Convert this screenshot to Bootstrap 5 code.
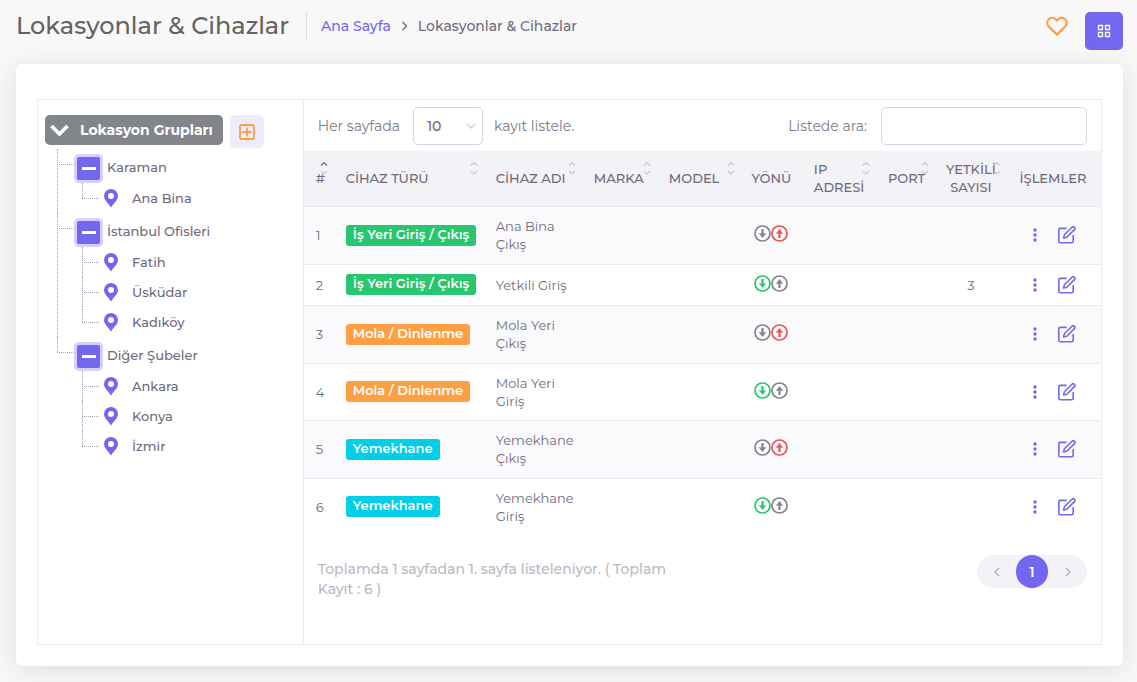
<!DOCTYPE html>
<html lang="tr">
<head>
<meta charset="utf-8">
<meta name="viewport" content="width=device-width, initial-scale=1">
<title>Lokasyonlar &amp; Cihazlar</title>
<link href="https://cdn.jsdelivr.net/npm/bootstrap@5.3.0/dist/css/bootstrap.min.css" rel="stylesheet">
<style>
:root{--brand:#7367f0;--ink:#6e6b7b;--line:#ebe9f1;--gray:#82868b;--green:#28c76f;--red:#ea5455;--orange:#ff9f43}
body{font-family:Montserrat,Inter,"Noto Sans",sans-serif;font-size:14px;line-height:20px;color:var(--ink);background:#f8f8f8}
a{color:var(--brand);text-decoration:none}
svg{display:block;flex:none}
.page-head{padding:12px 14px 14px 16px}
.page-title{font-size:24px;line-height:28px;font-weight:500;color:#636363;padding-right:17px;border-right:1px solid #d6dce1}
.crumbs{font-size:14px;font-weight:500;margin-left:14px;gap:10px}
.btn-grid{width:38px;height:38px;border-radius:5px;background:var(--brand);color:#fff}
.heart{color:var(--orange);padding:4px 0 0}
.panel-card{margin:0 14px 16px 16px;padding:35px 21px 21px;border:0;border-radius:6px;box-shadow:0 4px 24px rgba(34,41,47,.12)}
.split{border:1px solid var(--line);min-height:546px}
.side{border-right:1px solid var(--line);padding:15px 7px}
.side-head{gap:7px}
.root-btn{height:30px;padding:0 10px 0 5px;gap:11px;border-radius:5px;background:var(--gray);color:#fff;font-size:14px;font-weight:700}
.add-btn{width:34px;height:33px;border-radius:5px;background:#eeedfd;color:var(--orange)}
.tree,.tree ul{list-style:none;margin:0;padding:0}
.tree{font-size:13px;font-weight:500;margin-top:1px;padding-left:12px}
.tree li{position:relative}
.tree>li{padding:4px 0 0 20px}
.tree>li::before,.tree ul>li::before{content:"";position:absolute;left:0;top:0;bottom:0;border-left:1px dotted #a3a1b3}
.tree>li:last-child::before{bottom:auto;height:15px}
.tree>li::after,.tree ul>li::after{content:"";position:absolute;left:0;top:15px;width:17px;border-top:1px dotted #a3a1b3}
.tree ul{margin-left:5px}
.tree ul>li{padding-left:22px;height:30px}
.tree ul>li:last-child::before{bottom:auto;height:15px}
.group-row{height:30px;gap:7px}
.group-row a{padding-bottom:2px}
.toggle{width:23px;height:23px;border-radius:2px;background:var(--brand);box-shadow:0 0 0 3px #d5d1fb}
.toggle span{width:14px;height:3px;background:#fff}
.leaf{height:30px;gap:14px}
.tree a{color:var(--ink)}
.pin{color:var(--brand)}
.tools{padding:7px 14px 6px;color:#7c7a89}
.tools .form-select{width:70px;height:38px;padding:0 24px 0 13px;margin:0 11px 0 13px;font-size:14px;font-weight:500;color:var(--ink);border-color:#d8d6de;border-radius:5px;background-position:right 6px center;background-size:10px;background-image:url("data:image/svg+xml,%3Csvg xmlns='http://www.w3.org/2000/svg' viewBox='0 0 10 10' fill='none' stroke='%23d0ced8' stroke-width='1.3'%3E%3Cpath d='M1 3l4 4 4-4'/%3E%3C/svg%3E")}
.tools .form-control{width:206px;height:38px;margin-left:14px;border-color:#d8d6de;border-radius:5px}
.device-table{table-layout:fixed;margin:0;color:var(--ink);font-size:13px;line-height:18px}
.device-table th,.device-table td{padding:9px 4px 9px 12px;vertical-align:middle;border-color:var(--line);color:var(--ink);box-shadow:none}
.device-table th{position:relative;padding:9px 0 9px 12px;height:55px;font-weight:500;background:#f3f2f7}
.device-table .mid{padding-left:0;padding-right:0;text-align:center}
.device-table .mid:last-child{padding-right:2px}
.device-table td{height:57px;background:transparent}
.device-table tr:nth-child(odd) td{height:58px}
.device-table .low td{height:41px}
.device-table tbody tr:nth-child(odd){background:#fafafc}
.device-table tbody tr:last-child td{border-bottom:0}
.w-no{width:30px}.w-type{width:150px}.w-name{width:98px}.w-brand{width:75px}.w-model{width:84px}.w-dir{width:61px}.w-ip{width:74px}.w-port{width:59px}.w-auth{width:72px}.w-act{width:94px}
.sort{position:absolute;right:6px;top:10px;color:#c9c7d1}
.kind{height:21px;padding:0 7px;line-height:19px;font-size:13px;font-weight:600;border-radius:3px;color:#fff;display:inline-block;white-space:nowrap;vertical-align:middle}
.kind-work{background:var(--green)}.kind-rest{background:var(--orange)}.kind-food{background:#00cfe8}
.c-gray{color:var(--gray)}.c-green{color:var(--green)}.c-red{color:var(--red)}
.dirs{padding-bottom:3px}
.acts{gap:17px;color:var(--brand)}
.acts .btn{color:var(--brand)}
.foot{padding:20px 14px}
.foot-note{width:370px;color:#b9b9c3;font-weight:500;padding-top:4px}
.pager{border-radius:17px;background:#f3f2f7;height:33px}
.pager .page-item .page-link{width:39px;height:33px;margin:0;padding:0;border:0;background:none;color:#b0aebb;font-size:14px;display:flex;align-items:center;justify-content:center}
.pager .page-item.active .page-link{width:32px;border-radius:16px;background:var(--brand);color:#fff;font-weight:600}
</style>
</head>
<body>
<svg class="d-none" xmlns="http://www.w3.org/2000/svg">
<symbol id="pin" viewBox="0 0 14 19"><path fill="currentColor" fill-rule="evenodd" d="M7 0a7 7 0 0 0-7 7c0 4.500 4.500 7 7 11.500 2.500-4.500 7-7 7-11.500a7 7 0 0 0-7-7zm0 4a3 3 0 1 1 0 6 3 3 0 0 1 0-6z"/></symbol>
<symbol id="down" viewBox="0 0 17 17"><circle cx="8.500" cy="8.500" r="7.500" fill="none" stroke="currentColor" stroke-width="1.700"/><path d="M8.500 4v7" stroke="currentColor" stroke-width="2.200"/><path d="M4.600 8l2.400.6h3l2.400-.6-3.900 4.900z" fill="currentColor"/></symbol>
<symbol id="up" viewBox="0 0 17 17"><circle cx="8.500" cy="8.500" r="7.500" fill="none" stroke="currentColor" stroke-width="1.700"/><path d="M8.500 13V6" stroke="currentColor" stroke-width="2.200"/><path d="M4.600 9l2.400-.6h3l2.400.6-3.900-4.900z" fill="currentColor"/></symbol>
<symbol id="dots" viewBox="0 0 4 14"><g fill="currentColor"><circle cx="2" cy="2" r="1.700"/><circle cx="2" cy="7" r="1.700"/><circle cx="2" cy="12" r="1.700"/></g></symbol>
<symbol id="edit" viewBox="1 1 22.500 22.500"><path d="M11 4H4a2 2 0 0 0-2 2v14a2 2 0 0 0 2 2h14a2 2 0 0 0 2-2v-7M18.500 2.500a2.121 2.121 0 0 1 3 3L12 15l-4 1 1-4z" fill="none" stroke="currentColor" stroke-width="2" stroke-linecap="round" stroke-linejoin="round"/></symbol>
<symbol id="sort" viewBox="0 0 8 14"><path d="M1 4.500l3-3 3 3M1 10l3 3 3-3" fill="none" stroke="currentColor" stroke-width="1.200"/></symbol>
</svg>

<header class="page-head d-flex align-items-start">
  <h1 class="page-title mb-0">Lokasyonlar &amp; Cihazlar</h1>
  <nav class="crumbs d-flex align-items-center pt-1" aria-label="Sayfa yolu">
    <a href="#">Ana Sayfa</a>
    <svg width="7" height="10" viewBox="0 0 7 10" fill="none" stroke="#6e6b7b" stroke-width="1.400"><path d="M1.500 1l4 4-4 4"/></svg>
    <span>Lokasyonlar &amp; Cihazlar</span>
  </nav>
  <div class="ms-auto d-flex align-items-start gap-3">
    <button class="btn border-0 heart" type="button" aria-label="Favorilere ekle"><svg width="24" height="21" viewBox="0 0 24 21" fill="none" stroke="currentColor" stroke-width="2.200" stroke-linejoin="round"><path d="M20.300 3.300a5 5 0 0 0-7.100 0L12 4.500l-1.200-1.200a5 5 0 0 0-7.100 7.100L12 18.600l8.300-8.200a5 5 0 0 0 0-7.100z"/></svg></button>
    <button class="btn btn-grid border-0 p-0 d-flex align-items-center justify-content-center" type="button" aria-label="Menü"><svg width="14" height="14" viewBox="0 0 14 14" fill="none" stroke="currentColor" stroke-width="1.300"><path d="M1.500 1.500h4v4h-4zM8.500 1.500h4v4h-4zM1.500 8.500h4v4h-4zM8.500 8.500h4v4h-4z"/></svg></button>
  </div>
</header>

<main class="card panel-card">
  <div class="split row g-0">
    <aside class="side col-3">
      <div class="side-head d-flex align-items-start">
        <button class="btn border-0 root-btn d-flex align-items-center" type="button"><svg width="19" height="13" viewBox="0 0 19 13" fill="none" stroke="currentColor" stroke-width="3.600"><path d="M1.500 2l8 8 8-8"/></svg>Lokasyon Grupları</button>
        <button class="btn border-0 p-0 add-btn d-flex align-items-center justify-content-center" type="button" aria-label="Grup ekle"><svg width="16" height="16" viewBox="0 0 16 16" fill="none" stroke="currentColor" stroke-width="1.800"><rect x="1" y="1" width="14" height="14" rx="1.500"/><path d="M8 3.500v9M3.500 8h9"/></svg></button>
      </div>
      <ul class="tree">
        <li>
          <div class="group-row d-flex align-items-center"><button class="btn border-0 p-0 toggle d-flex align-items-center justify-content-center" type="button" aria-label="Daralt"><span></span></button><a href="#">Karaman</a></div>
          <ul>
            <li><a class="leaf d-flex align-items-center" href="#"><svg class="pin" width="14" height="19"><use href="#pin"/></svg>Ana Bina</a></li>
          </ul>
        </li>
        <li>
          <div class="group-row d-flex align-items-center"><button class="btn border-0 p-0 toggle d-flex align-items-center justify-content-center" type="button" aria-label="Daralt"><span></span></button><a href="#">İstanbul Ofisleri</a></div>
          <ul>
            <li><a class="leaf d-flex align-items-center" href="#"><svg class="pin" width="14" height="19"><use href="#pin"/></svg>Fatih</a></li>
            <li><a class="leaf d-flex align-items-center" href="#"><svg class="pin" width="14" height="19"><use href="#pin"/></svg>Üsküdar</a></li>
            <li><a class="leaf d-flex align-items-center" href="#"><svg class="pin" width="14" height="19"><use href="#pin"/></svg>Kadıköy</a></li>
          </ul>
        </li>
        <li>
          <div class="group-row d-flex align-items-center"><button class="btn border-0 p-0 toggle d-flex align-items-center justify-content-center" type="button" aria-label="Daralt"><span></span></button><a href="#">Diğer Şubeler</a></div>
          <ul>
            <li><a class="leaf d-flex align-items-center" href="#"><svg class="pin" width="14" height="19"><use href="#pin"/></svg>Ankara</a></li>
            <li><a class="leaf d-flex align-items-center" href="#"><svg class="pin" width="14" height="19"><use href="#pin"/></svg>Konya</a></li>
            <li><a class="leaf d-flex align-items-center" href="#"><svg class="pin" width="14" height="19"><use href="#pin"/></svg>İzmir</a></li>
          </ul>
        </li>
      </ul>
    </aside>

    <section class="col-9">
      <div class="tools d-flex align-items-center justify-content-between">
        <div class="d-flex align-items-center"><label for="len">Her sayfada</label><select id="len" class="form-select"><option>10</option><option>25</option></select><span>kayıt listele.</span></div>
        <div class="d-flex align-items-center"><label for="find">Listede ara:</label><input id="find" class="form-control" type="search"></div>
      </div>
      <table class="table device-table">
        <colgroup><col class="w-no"><col class="w-type"><col class="w-name"><col class="w-brand"><col class="w-model"><col class="w-dir"><col class="w-ip"><col class="w-port"><col class="w-auth"><col class="w-act"></colgroup>
        <thead>
          <tr>
            <th>#<svg class="sort" width="8" height="14" viewBox="0 0 8 14" fill="none" stroke-width="1.200"><path d="M1 4.500l3-3 3 3" stroke="#6e6b7b"/><path d="M1 10l3 3 3-3" stroke="currentColor"/></svg></th>
            <th>CİHAZ TÜRÜ<svg class="sort" width="8" height="14"><use href="#sort"/></svg></th>
            <th>CİHAZ ADI<svg class="sort" width="8" height="14"><use href="#sort"/></svg></th>
            <th>MARKA<svg class="sort" width="8" height="14"><use href="#sort"/></svg></th>
            <th>MODEL<svg class="sort" width="8" height="14"><use href="#sort"/></svg></th>
            <th class="mid">YÖNÜ</th>
            <th>IP<br>ADRESİ<svg class="sort" width="8" height="14"><use href="#sort"/></svg></th>
            <th>PORT<svg class="sort" width="8" height="14"><use href="#sort"/></svg></th>
            <th class="mid">YETKİLİ<br>SAYISI<svg class="sort" width="8" height="14"><use href="#sort"/></svg></th>
            <th class="mid">İŞLEMLER</th>
          </tr>
        </thead>
        <tbody>
          <tr>
            <td>1</td><td><span class="kind kind-work">İş Yeri Giriş / Çıkış</span></td><td>Ana Bina Çıkış</td><td></td><td></td>
            <td class="mid"><div class="dirs d-flex justify-content-center"><svg class="c-gray" width="17" height="17"><use href="#down"/></svg><svg class="c-red" width="17" height="17"><use href="#up"/></svg></div></td>
            <td></td><td></td><td class="mid"></td>
            <td class="mid"><div class="acts d-flex justify-content-center align-items-center"><button class="btn border-0 p-0 px-1" type="button" aria-label="Seçenekler"><svg width="4" height="14"><use href="#dots"/></svg></button><a href="#" aria-label="Düzenle"><svg width="18" height="18"><use href="#edit"/></svg></a></div></td>
          </tr>
          <tr class="low">
            <td>2</td><td><span class="kind kind-work">İş Yeri Giriş / Çıkış</span></td><td class="text-nowrap">Yetkili Giriş</td><td></td><td></td>
            <td class="mid"><div class="dirs d-flex justify-content-center"><svg class="c-green" width="17" height="17"><use href="#down"/></svg><svg class="c-gray" width="17" height="17"><use href="#up"/></svg></div></td>
            <td></td><td></td><td class="mid">3</td>
            <td class="mid"><div class="acts d-flex justify-content-center align-items-center"><button class="btn border-0 p-0 px-1" type="button" aria-label="Seçenekler"><svg width="4" height="14"><use href="#dots"/></svg></button><a href="#" aria-label="Düzenle"><svg width="18" height="18"><use href="#edit"/></svg></a></div></td>
          </tr>
          <tr>
            <td>3</td><td><span class="kind kind-rest">Mola / Dinlenme</span></td><td>Mola Yeri Çıkış</td><td></td><td></td>
            <td class="mid"><div class="dirs d-flex justify-content-center"><svg class="c-gray" width="17" height="17"><use href="#down"/></svg><svg class="c-red" width="17" height="17"><use href="#up"/></svg></div></td>
            <td></td><td></td><td class="mid"></td>
            <td class="mid"><div class="acts d-flex justify-content-center align-items-center"><button class="btn border-0 p-0 px-1" type="button" aria-label="Seçenekler"><svg width="4" height="14"><use href="#dots"/></svg></button><a href="#" aria-label="Düzenle"><svg width="18" height="18"><use href="#edit"/></svg></a></div></td>
          </tr>
          <tr>
            <td>4</td><td><span class="kind kind-rest">Mola / Dinlenme</span></td><td>Mola Yeri Giriş</td><td></td><td></td>
            <td class="mid"><div class="dirs d-flex justify-content-center"><svg class="c-green" width="17" height="17"><use href="#down"/></svg><svg class="c-gray" width="17" height="17"><use href="#up"/></svg></div></td>
            <td></td><td></td><td class="mid"></td>
            <td class="mid"><div class="acts d-flex justify-content-center align-items-center"><button class="btn border-0 p-0 px-1" type="button" aria-label="Seçenekler"><svg width="4" height="14"><use href="#dots"/></svg></button><a href="#" aria-label="Düzenle"><svg width="18" height="18"><use href="#edit"/></svg></a></div></td>
          </tr>
          <tr>
            <td>5</td><td><span class="kind kind-food">Yemekhane</span></td><td>Yemekhane Çıkış</td><td></td><td></td>
            <td class="mid"><div class="dirs d-flex justify-content-center"><svg class="c-gray" width="17" height="17"><use href="#down"/></svg><svg class="c-red" width="17" height="17"><use href="#up"/></svg></div></td>
            <td></td><td></td><td class="mid"></td>
            <td class="mid"><div class="acts d-flex justify-content-center align-items-center"><button class="btn border-0 p-0 px-1" type="button" aria-label="Seçenekler"><svg width="4" height="14"><use href="#dots"/></svg></button><a href="#" aria-label="Düzenle"><svg width="18" height="18"><use href="#edit"/></svg></a></div></td>
          </tr>
          <tr>
            <td>6</td><td><span class="kind kind-food">Yemekhane</span></td><td>Yemekhane Giriş</td><td></td><td></td>
            <td class="mid"><div class="dirs d-flex justify-content-center"><svg class="c-green" width="17" height="17"><use href="#down"/></svg><svg class="c-gray" width="17" height="17"><use href="#up"/></svg></div></td>
            <td></td><td></td><td class="mid"></td>
            <td class="mid"><div class="acts d-flex justify-content-center align-items-center"><button class="btn border-0 p-0 px-1" type="button" aria-label="Seçenekler"><svg width="4" height="14"><use href="#dots"/></svg></button><a href="#" aria-label="Düzenle"><svg width="18" height="18"><use href="#edit"/></svg></a></div></td>
          </tr>
        </tbody>
      </table>
      <div class="foot d-flex justify-content-between align-items-start">
        <div class="foot-note">Toplamda 1 sayfadan 1. sayfa listeleniyor. ( Toplam Kayıt : 6 )</div>
        <ul class="pagination pager mb-0">
          <li class="page-item"><a class="page-link" href="#" aria-label="Önceki"><svg width="6" height="10" viewBox="0 0 6 10" fill="none" stroke="currentColor" stroke-width="1.400"><path d="M5 1L1 5l4 4"/></svg></a></li>
          <li class="page-item active"><a class="page-link" href="#">1</a></li>
          <li class="page-item"><a class="page-link" href="#" aria-label="Sonraki"><svg width="6" height="10" viewBox="0 0 6 10" fill="none" stroke="currentColor" stroke-width="1.400"><path d="M1 1l4 4-4 4"/></svg></a></li>
        </ul>
      </div>
    </section>
  </div>
</main>
<script src="https://cdn.jsdelivr.net/npm/bootstrap@5.3.0/dist/js/bootstrap.bundle.min.js"></script>
</body>
</html>
